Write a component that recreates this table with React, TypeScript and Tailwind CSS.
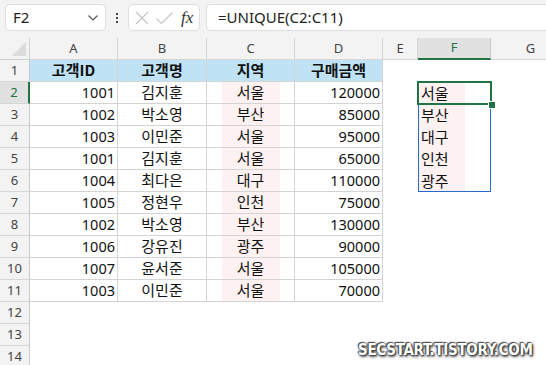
import React from "react";

const data: [string, string, string, string][] = [
  ["1001", "김지훈", "서울", "120000"],
  ["1002", "박소영", "부산", "85000"],
  ["1003", "이민준", "서울", "95000"],
  ["1001", "김지훈", "서울", "65000"],
  ["1004", "최다은", "대구", "110000"],
  ["1005", "정현우", "인천", "75000"],
  ["1002", "박소영", "부산", "130000"],
  ["1006", "강유진", "광주", "90000"],
  ["1007", "윤서준", "서울", "105000"],
  ["1003", "이민준", "서울", "70000"],
];
const uniq = ["서울", "부산", "대구", "인천", "광주"];
const cols = ["A", "B", "C", "D", "E", "F", "G"];

const font = { fontFamily: '"Noto Sans", "Noto Sans CJK KR", sans-serif' };
const kr = { fontFamily: '"Noto Sans CJK KR", "Noto Sans", sans-serif' };

export default function App() {
  const rows = Array.from({ length: 14 }, (_, i) => i + 1);
  return (
    <div className="w-[546px] h-[365px] overflow-hidden bg-white relative" style={font}>
      {/* formula bar */}
      <div className="h-[38px] bg-[#f3f3f3] flex items-start pt-[4px]">
        <div className="ml-[5px] w-[101px] h-[27px] bg-white border border-[#dedede] rounded-[5px] flex items-center justify-between pl-[7px] pr-[6px]">
          <span className="text-[15px] text-[#222] leading-none">F2</span>
          <svg width="12" height="8" viewBox="0 0 12 8">
            <path d="M1.5 1.5 L6 6 L10.5 1.5" fill="none" stroke="#555" strokeWidth="1.2" />
          </svg>
        </div>
        <div className="w-[22px] h-[27px] flex flex-col items-center justify-center gap-[2px]">
          <div className="w-[2px] h-[2px] bg-[#444]" />
          <div className="w-[2px] h-[2px] bg-[#444]" />
          <div className="w-[2px] h-[2px] bg-[#444]" />
        </div>
        <div className="w-[72px] h-[27px] bg-white border border-[#dedede] rounded-[5px] flex items-center pl-[4px]">
          <svg width="16" height="16" viewBox="0 0 16 16" className="ml-[1px]">
            <path d="M2 2 L14 14 M14 2 L2 14" stroke="#c4c4c4" strokeWidth="1.1" fill="none" />
          </svg>
          <svg width="19" height="16" viewBox="0 0 19 16" className="ml-[5px]">
            <path d="M1.5 8.5 L6.5 13.5 L17.5 2.5" stroke="#c4c4c4" strokeWidth="1.1" fill="none" />
          </svg>
          <span className="ml-[7px] text-[17px] italic text-[#333] leading-none" style={{ fontFamily: '"Liberation Serif", serif' }}>
            fx
          </span>
        </div>
        <div className="ml-[6px] flex-1 h-[27px] bg-white border border-[#dedede] border-r-0 rounded-l-[5px] flex items-center pl-[11px]">
          <span className="text-[15px] text-[#222] leading-none">=UNIQUE(C2:C11)</span>
        </div>
      </div>

      {/* grid */}
      <div className="relative">
        <div className="grid grid-cols-[30px_88px_89px_88px_88px_35px_73px_80px] auto-rows-[22px]">
          {/* header row */}
          <div className="bg-[#f3f3f3] border-r border-b border-[#d0d0d0] flex items-end justify-end pr-[3px] pb-[3px]">
            <svg width="14" height="14" viewBox="0 0 14 14">
              <path d="M14 0 L14 14 L0 14 Z" fill="#dcdcdc" />
            </svg>
          </div>
          {cols.map((c) =>
            c === "F" ? (
              <div key={c} className="bg-[#e1e1e1] border-r border-[#c8c8c8] border-b-2 border-b-[#217346] flex items-center justify-center text-[13px] text-[#217346]">
                {c}
              </div>
            ) : (
              <div key={c} className="bg-[#f3f3f3] border-r border-b border-[#d6d6d6] flex items-center justify-center text-[13px] text-[#444]">
                {c}
              </div>
            )
          )}

          {rows.map((r) => {
            const d = r >= 2 && r <= 11 ? data[r - 2] : null;
            const isTable = r <= 11;
            const cell = "border-r border-b border-[#d4d4d4]";
            const rowHead =
              r === 2 ? (
                <div key={`h${r}`} className="bg-[#e1e1e1] border-b border-[#d6d6d6] border-r-2 border-r-[#217346] flex items-center justify-center text-[13px] text-[#217346]">
                  {r}
                </div>
              ) : (
                <div key={`h${r}`} className="bg-[#f3f3f3] border-b border-[#d6d6d6] border-r border-r-[#c8c8c8] flex items-center justify-center text-[13px] text-[#444]">
                  {r}
                </div>
              );
            const fVal = r >= 2 && r <= 6 ? uniq[r - 2] : null;
            return (
              <React.Fragment key={r}>
                {rowHead}
                {r === 1 ? (
                  <>
                    {["고객ID", "고객명", "지역", "구매금액"].map((t) => (
                      <div key={t} className={`${cell} bg-[#bfe3f5] flex items-center justify-center text-[15px] font-bold text-[#111]`} style={kr}>
                        {t}
                      </div>
                    ))}
                  </>
                ) : d ? (
                  <>
                    <div className={`${cell} flex items-center justify-end pr-[2px] text-[14.5px] text-[#111]`}>{d[0]}</div>
                    <div className={`${cell} flex items-center justify-center text-[15px] text-[#111]`} style={kr}>{d[1]}</div>
                    <div className={`${cell} flex items-stretch justify-center`}>
                      <span className="w-[58px] bg-[#fdf1f1] flex items-center justify-center text-[15px] text-[#111]" style={kr}>{d[2]}</span>
                    </div>
                    <div className={`${cell} flex items-center justify-end pr-[2px] text-[14.5px] text-[#111]`}>{d[3]}</div>
                  </>
                ) : (
                  <>
                    <div />
                    <div />
                    <div />
                    <div />
                  </>
                )}
                <div />
                <div className="flex items-stretch">
                  {fVal ? (
                    <span className="w-[47px] bg-[#fdf1f1] flex items-center pl-[3px] text-[15px] text-[#111]" style={kr}>{fVal}</span>
                  ) : null}
                </div>
                <div />
                {isTable ? null : null}
              </React.Fragment>
            );
          })}
        </div>

        {/* spill range border */}
        <div className="absolute left-[418px] top-[44px] w-[73px] h-[110px] border border-[#2a68cc] pointer-events-none" />
        {/* active cell */}
        <div className="absolute left-[417px] top-[43px] w-[75px] h-[24px] border-2 border-[#217346] pointer-events-none" />
        <div className="absolute left-[488px] top-[63px] w-[6px] h-[6px] bg-[#217346] border border-white box-content pointer-events-none" />
      </div>

      {/* watermark */}
      <div
        className="absolute left-[358px] top-[339px] text-[15px] font-bold text-white tracking-[-0.3px]"
        style={{
          fontFamily: '"DejaVu Sans Condensed", "Liberation Sans", sans-serif',
          textShadow: "0 0 2px #222, 1px 1px 2px #333, -1px -1px 1px #555, 1px 2px 3px rgba(0,0,0,0.5)",
        }}
      >
        SECSTART.TISTORY.COM
      </div>
    </div>
  );
}
